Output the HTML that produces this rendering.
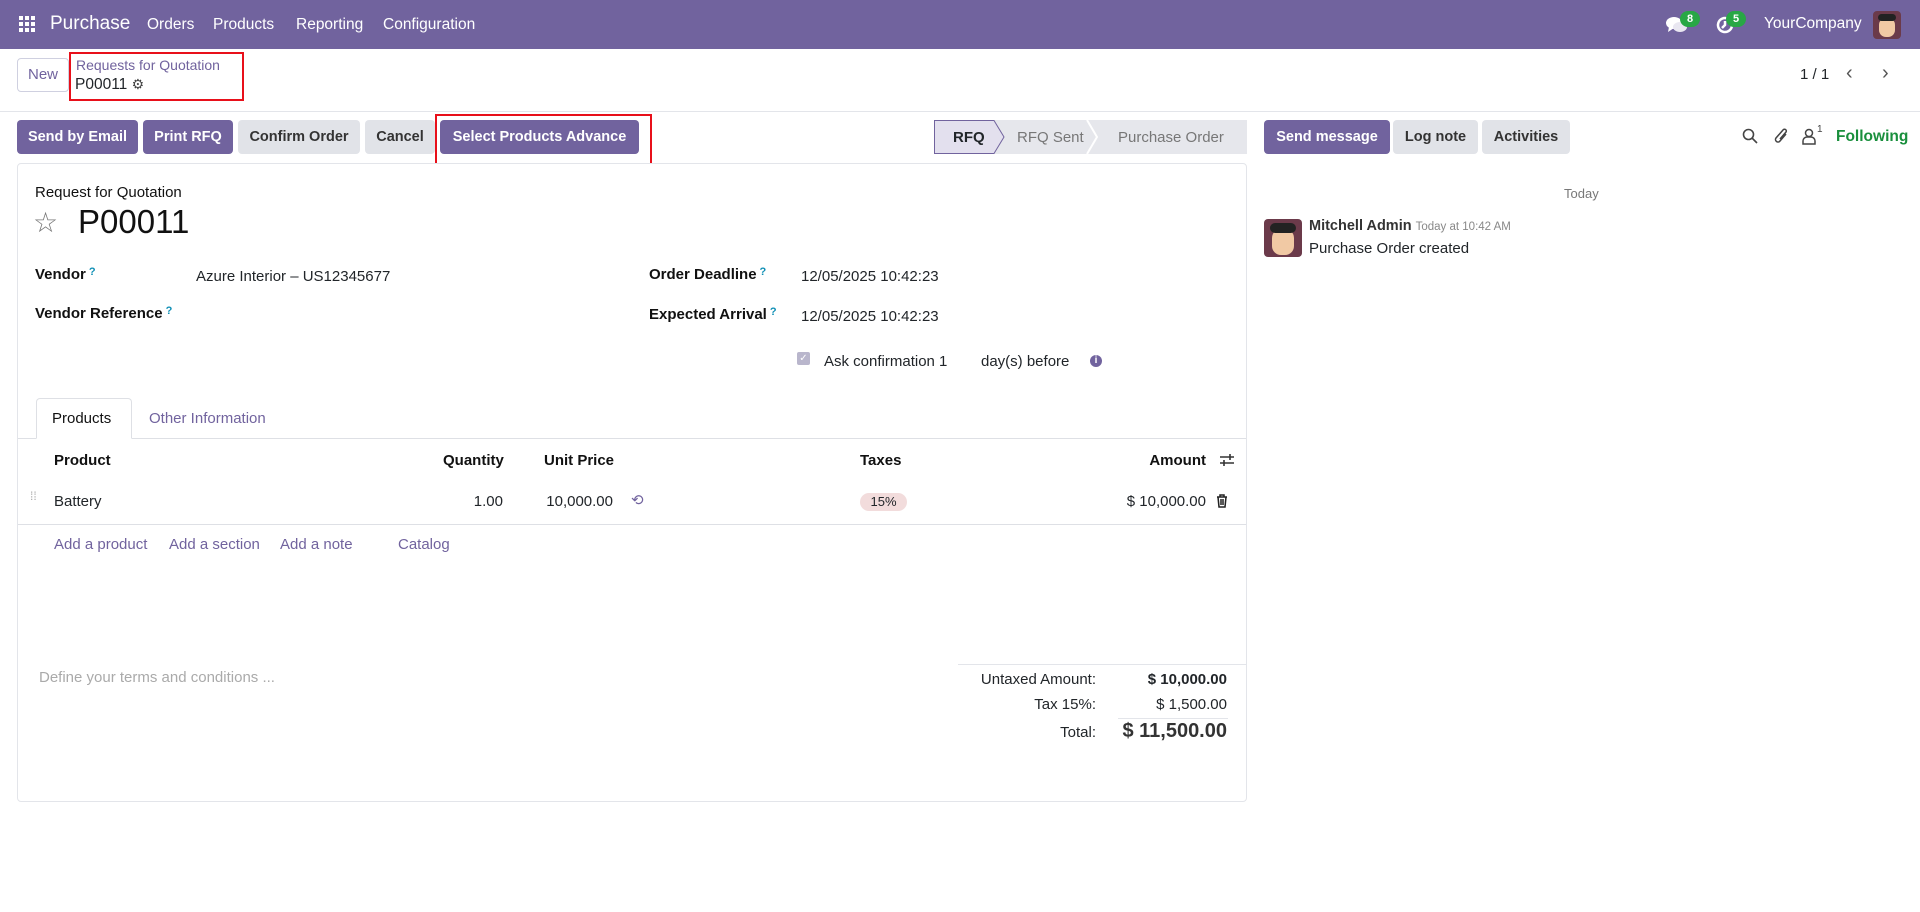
<!DOCTYPE html>
<html><head><meta charset="utf-8">
<style>
*{box-sizing:border-box;margin:0;padding:0}
body{width:1920px;height:912px;background:#fff;font-family:"Liberation Sans",sans-serif;font-size:15px;color:#212529;position:relative;overflow:hidden}
.a{position:absolute;white-space:nowrap}
.nav{left:0;top:0;width:1920px;height:49px;background:#71639e;color:#fff}
.btn{position:absolute;height:34px;line-height:34px;text-align:center;border-radius:4px;font-size:14.5px;font-weight:bold}
.pri{background:#71639e;color:#fff}
.sec{background:#e1e3e8;color:#333}
.lbl{font-weight:bold;color:#111}
.q{color:#0f8fb5;font-size:11px;vertical-align:top;margin-left:3px}
.lnk{color:#71639e}
.red{position:absolute;border:2px solid #e8101a}
</style></head><body>
<div class="a nav">
  <svg class="a" style="left:19px;top:16px" width="17" height="17" viewBox="0 0 17 17" fill="#fff"><rect x="0" y="0" width="4" height="4"/><rect x="6" y="0" width="4" height="4"/><rect x="12" y="0" width="4" height="4"/><rect x="0" y="6" width="4" height="4"/><rect x="6" y="6" width="4" height="4"/><rect x="12" y="6" width="4" height="4"/><rect x="0" y="12" width="4" height="4"/><rect x="6" y="12" width="4" height="4"/><rect x="12" y="12" width="4" height="4"/></svg>
  <div class="a" style="left:50px;top:13px;font-size:19px">Purchase</div>
  <div class="a" style="left:147px;top:16px;font-size:15.5px">Orders</div>
  <div class="a" style="left:213px;top:16px;font-size:15.5px">Products</div>
  <div class="a" style="left:296px;top:16px;font-size:15.5px">Reporting</div>
  <div class="a" style="left:383px;top:16px;font-size:15.5px">Configuration</div>
  <svg class="a" style="left:1666px;top:15px" width="22" height="20" viewBox="0 0 22 20" fill="#fff"><ellipse cx="8" cy="8" rx="8" ry="6"/><path d="M3 12 L2 17 L8 13Z"/><ellipse cx="14" cy="12" rx="7" ry="5" fill="#e9e7f1"/></svg>
  <div class="a" style="left:1680px;top:11px;background:#28a745;border-radius:9px;width:20px;height:16px;font-size:11px;text-align:center;line-height:16px;font-weight:bold">8</div>
  <svg class="a" style="left:1715px;top:15px" width="20" height="20" viewBox="0 0 20 20" fill="none" stroke="#fff" stroke-width="2.5"><path d="M17 10a7 7 0 1 1-4-6.3"/><path d="M10 6v4l-3 3"/></svg>
  <div class="a" style="left:1726px;top:11px;background:#28a745;border-radius:9px;width:20px;height:16px;font-size:11px;text-align:center;line-height:16px;font-weight:bold">5</div>
  <div class="a" style="left:1764px;top:15px;font-size:15.5px">YourCompany</div>
  <div class="a" style="left:1873px;top:11px;width:28px;height:28px;border-radius:4px;background:#6b3a4a;overflow:hidden"><div class="a" style="left:6px;top:7px;width:16px;height:19px;border-radius:7px;background:#f1c9a4"></div><div class="a" style="left:5px;top:3px;width:18px;height:7px;border-radius:4px;background:#222"></div></div>
</div>

<div class="a" style="left:17px;top:58px;width:52px;height:34px;border:1px solid #cfd0e0;border-radius:4px;color:#71639e;text-align:center;line-height:32px;font-size:15px">New</div>
<div class="a lnk" style="left:76px;top:57px;font-size:14px">Requests for Quotation</div>
<div class="a" style="left:75px;top:76px;font-size:15.5px">P00011 <span style="font-size:14px;color:#444">⚙</span></div>
<div class="red" style="left:69px;top:52px;width:175px;height:49px"></div>
<div class="a" style="left:1800px;top:66px;font-size:15px">1 / 1</div>
<div class="a" style="left:1846px;top:62px;font-size:20px;color:#555">‹</div>
<div class="a" style="left:1882px;top:62px;font-size:20px;color:#555">›</div>
<div class="a" style="left:0;top:111px;width:1920px;height:1px;background:#e3e5ea"></div>

<div class="btn pri" style="left:17px;top:120px;width:121px">Send by Email</div>
<div class="btn pri" style="left:143px;top:120px;width:90px">Print RFQ</div>
<div class="btn sec" style="left:238px;top:120px;width:122px">Confirm Order</div>
<div class="btn sec" style="left:365px;top:120px;width:70px">Cancel</div>
<div class="btn pri" style="left:440px;top:120px;width:199px">Select Products Advance</div>
<div class="red" style="left:435px;top:114px;width:217px;height:51px"></div>

<svg class="a" style="left:934px;top:120px" width="313" height="34" viewBox="0 0 313 34"><rect x="0" y="0" width="313" height="34" fill="#e6e7ec"/><path d="M0.5 0.5H60L70 17L60 33.5H0.5Z" fill="#e3e0ee" stroke="#71639e"/><path d="M153 0L163 17L153 34" fill="none" stroke="#fff" stroke-width="2"/></svg>
<div class="a" style="left:953px;top:129px;font-weight:bold;font-size:15px">RFQ</div>
<div class="a" style="left:1017px;top:129px;color:#777;font-size:15px">RFQ Sent</div>
<div class="a" style="left:1118px;top:129px;color:#777;font-size:15px">Purchase Order</div>

<div class="btn pri" style="left:1264px;top:120px;width:126px">Send message</div>
<div class="btn sec" style="left:1393px;top:120px;width:85px">Log note</div>
<div class="btn sec" style="left:1482px;top:120px;width:88px">Activities</div>
<svg class="a" style="left:1742px;top:128px" width="16" height="16" viewBox="0 0 16 16" fill="none" stroke="#444" stroke-width="1.6"><circle cx="6.5" cy="6.5" r="5"/><path d="M10 10l5 5"/></svg>
<svg class="a" style="left:1774px;top:126px" width="16" height="20" viewBox="0 0 16 20" fill="none" stroke="#444" stroke-width="1.5"><path d="M12 8l-6 7a2.5 2.5 0 0 1-4-3l7-8a1.7 1.7 0 0 1 3 2l-6 7"/></svg>
<svg class="a" style="left:1802px;top:128px" width="14" height="17" viewBox="0 0 14 17" fill="none" stroke="#444" stroke-width="1.5"><circle cx="7" cy="5" r="3.5"/><path d="M1 16v-3a4 4 0 0 1 4-4h4a4 4 0 0 1 4 4v3z"/></svg>
<div class="a" style="left:1817px;top:124px;font-size:10px;color:#444">1</div>
<div class="a" style="left:1836px;top:128px;color:#198f3c;font-weight:bold;font-size:15.5px">Following</div>

<div class="a" style="left:17px;top:163px;width:1230px;height:639px;border:1px solid #e3e5ea;border-radius:4px;background:#fff"></div>
<div class="a" style="left:35px;top:184px;font-size:15px;color:#111">Request for Quotation</div>
<div class="a" style="left:33px;top:206px;font-size:28px;color:#777">☆</div>
<div class="a" style="left:78px;top:203px;font-size:33px;color:#111">P00011</div>

<div class="a lbl" style="left:35px;top:266px">Vendor<span class="q">?</span></div>
<div class="a" style="left:196px;top:268px">Azure Interior – US12345677</div>
<div class="a lbl" style="left:35px;top:305px">Vendor Reference<span class="q">?</span></div>
<div class="a lbl" style="left:649px;top:266px">Order Deadline<span class="q">?</span></div>
<div class="a" style="left:801px;top:268px">12/05/2025 10:42:23</div>
<div class="a lbl" style="left:649px;top:306px">Expected Arrival<span class="q">?</span></div>
<div class="a" style="left:801px;top:308px">12/05/2025 10:42:23</div>
<div class="a" style="left:797px;top:352px;width:13px;height:13px;border-radius:2px;background:#b9b6cc;color:#fff;font-size:10px;text-align:center;line-height:13px">✓</div>
<div class="a" style="left:824px;top:353px">Ask confirmation 1</div>
<div class="a" style="left:981px;top:353px">day(s) before</div>
<div class="a" style="left:1090px;top:355px;width:12px;height:12px;border-radius:6px;background:#71639e;color:#fff;font-size:10px;text-align:center;line-height:12px;font-weight:bold">i</div>

<div class="a" style="left:18px;top:438px;width:1228px;height:1px;background:#dee0e5"></div>
<div class="a" style="left:36px;top:398px;width:96px;height:41px;border:1px solid #dee0e5;border-bottom:1px solid #fff;border-radius:4px 4px 0 0;background:#fff"></div>
<div class="a" style="left:52px;top:410px;color:#111">Products</div>
<div class="a lnk" style="left:149px;top:410px">Other Information</div>

<div class="a lbl" style="left:54px;top:452px">Product</div>
<div class="a lbl" style="left:443px;top:452px;width:60px;text-align:right">Quantity</div>
<div class="a lbl" style="left:544px;top:452px">Unit Price</div>
<div class="a lbl" style="left:860px;top:452px">Taxes</div>
<div class="a lbl" style="left:1100px;top:452px;width:106px;text-align:right">Amount</div>
<svg class="a" style="left:1219px;top:452px" width="16" height="16" viewBox="0 0 16 16" stroke="#333" stroke-width="1.6" fill="none"><path d="M1 5h14M1 11h14M11 2v6M5 8v6"/></svg>
<div class="a" style="left:30px;top:494px;color:#aaa;font-size:12px;line-height:5px">⁞⁞</div>
<div class="a" style="left:54px;top:493px">Battery</div>
<div class="a" style="left:443px;top:493px;width:60px;text-align:right">1.00</div>
<div class="a" style="left:530px;top:493px;width:83px;text-align:right">10,000.00</div>
<div class="a lnk" style="left:631px;top:491px;font-size:15px">⟲</div>
<div class="a" style="left:860px;top:493px;width:47px;height:18px;border-radius:9px;background:#f2dcdc;font-size:13px;text-align:center;line-height:18px">15%</div>
<div class="a" style="left:1100px;top:493px;width:106px;text-align:right">$ 10,000.00</div>
<svg class="a" style="left:1216px;top:494px" width="12" height="14" viewBox="0 0 12 14" fill="none" stroke="#222" stroke-width="1.5"><path d="M1 3h10M4 3V1h4v2M2 3l1 10h6l1-10M5 5v6M7 5v6"/></svg>
<div class="a" style="left:18px;top:524px;width:1228px;height:1px;background:#dee0e5"></div>
<div class="a lnk" style="left:54px;top:536px">Add a product</div>
<div class="a lnk" style="left:169px;top:536px">Add a section</div>
<div class="a lnk" style="left:280px;top:536px">Add a note</div>
<div class="a lnk" style="left:398px;top:536px">Catalog</div>

<div class="a" style="left:39px;top:669px;color:#aaa">Define your terms and conditions ...</div>
<div class="a" style="left:958px;top:664px;width:288px;height:1px;background:#e3e5ea"></div>
<div class="a" style="left:940px;top:671px;width:156px;text-align:right">Untaxed Amount:</div>
<div class="a" style="left:1080px;top:671px;width:147px;text-align:right;font-weight:bold">$ 10,000.00</div>
<div class="a" style="left:940px;top:696px;width:156px;text-align:right">Tax 15%:</div>
<div class="a" style="left:1080px;top:696px;width:147px;text-align:right">$ 1,500.00</div>
<div class="a" style="left:1118px;top:718px;width:110px;height:1px;background:#e3e5ea"></div>
<div class="a" style="left:940px;top:724px;width:156px;text-align:right">Total:</div>
<div class="a" style="left:1060px;top:720px;width:167px;text-align:right;font-weight:bold;font-size:20px;color:#333">$ 11,500.00</div>

<div class="a" style="left:1564px;top:186px;color:#777;font-size:13px">Today</div>
<div class="a" style="left:1264px;top:219px;width:38px;height:38px;border-radius:4px;background:#6b3a4a;overflow:hidden"><div class="a" style="left:8px;top:10px;width:22px;height:26px;border-radius:9px;background:#f1c9a4"></div><div class="a" style="left:6px;top:4px;width:26px;height:10px;border-radius:5px;background:#222"></div></div>
<div class="a" style="left:1309px;top:218px;font-weight:bold;font-size:14.5px;color:#333">Mitchell Admin <span style="font-weight:normal;font-size:11.5px;color:#888">Today at 10:42 AM</span></div>
<div class="a" style="left:1309px;top:240px;font-size:15px">Purchase Order created</div>
</body></html>
